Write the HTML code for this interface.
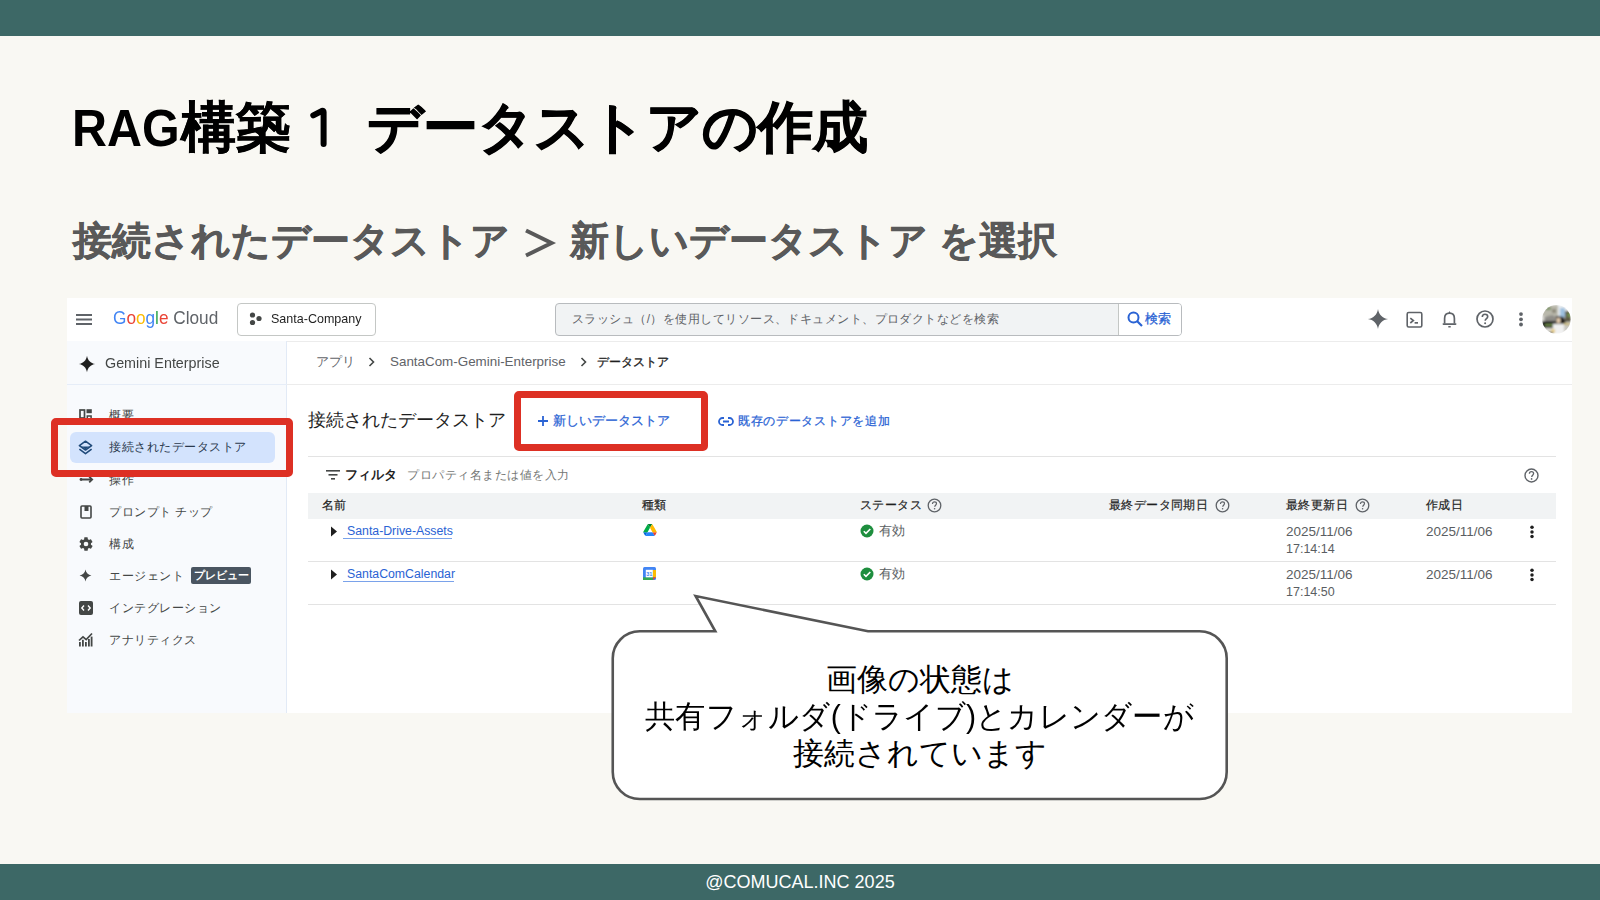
<!DOCTYPE html>
<html><head><meta charset="utf-8">
<style>
*{box-sizing:border-box;margin:0;padding:0}
html,body{width:1600px;height:900px;overflow:hidden}
body{position:relative;background:#f9f8f3;font-family:"Liberation Sans",sans-serif;color:#000}
.a{position:absolute;white-space:nowrap}
#topbar{position:absolute;left:0;top:0;width:1600px;height:36px;background:#3d6866}
#botbar{position:absolute;left:0;top:864px;width:1600px;height:36px;background:#3d6866}
#footer{position:absolute;left:0;top:864px;width:1600px;height:36px;line-height:36px;text-align:center;color:#fff;font-size:18px}
.tt{font-size:55px;font-weight:bold;line-height:64px;color:#000;top:94px}
.st{font-size:39px;font-weight:bold;line-height:52px;color:#595959;top:215px}
#shot{position:absolute;left:67px;top:298px;width:1505px;height:415px;background:#fff}
#side{position:absolute;left:67px;top:341px;width:220px;height:372px;background:#f8fafd;border-right:1px solid #e2eaf6}
.hl{position:absolute;height:1px;background:#e3e3e3}
.g13{font-size:13px;color:#444746;line-height:16px}
.mi{left:109px;font-size:12px;letter-spacing:0.5px;color:#444746;line-height:16px}
.th{font-size:12px;color:#1f1f1f;line-height:16px;letter-spacing:0.4px;-webkit-text-stroke:0.2px #1f1f1f}
.td{font-size:12.5px;color:#5a5e62;line-height:17.3px}
.blue{color:#2a63d4}
.red{position:absolute;border:7.7px solid #dd3024;border-radius:5px}
svg{position:absolute;overflow:visible}
</style></head>
<body>
<div id="topbar"></div>
<div class="a tt" style="left:72px;top:96px;font-size:51.5px;transform:scaleX(0.94);transform-origin:0 0">RAG</div>
<div class="a tt" style="left:181px;top:95px;-webkit-text-stroke:0.4px #000">構築</div>
<svg style="left:0;top:0" width="400" height="200"><path d="M313.3 115.3 L322 110.8 Q323.6 110.2 323.6 112 L323.6 144" fill="none" stroke="#000" stroke-width="6" stroke-linecap="round" stroke-linejoin="round"/></svg>
<div class="a tt" style="left:367px;top:95px;-webkit-text-stroke:0.9px #000">データストアの作成</div>
<div class="a st" style="left:73px;-webkit-text-stroke:0.5px #595959">接続されたデータストア</div>
<svg style="left:0;top:0" width="600" height="300"><path d="M526 230.5 L551.5 243 L526 255.5" fill="none" stroke="#595959" stroke-width="4"/></svg>
<div class="a st" style="left:570px;-webkit-text-stroke:0.5px #595959">新しいデータストア</div>
<div class="a st" style="left:939px;-webkit-text-stroke:0.5px #595959">を選択</div>

<div id="shot"></div>
<div class="hl" style="left:67px;top:341px;width:1505px;background:#ececec"></div>
<div id="side"></div>

<!-- header -->
<svg style="left:76px;top:313px" width="16" height="12"><g fill="#5f6368"><rect x="0" y="1" width="16" height="2"/><rect x="0" y="5.5" width="16" height="2"/><rect x="0" y="10" width="16" height="2"/></g></svg>
<div class="a" style="left:113px;top:307px;font-size:18.5px;line-height:22px;transform:scaleX(0.93);transform-origin:0 0"><span style="color:#4285f4">G</span><span style="color:#ea4335">o</span><span style="color:#fbbc04">o</span><span style="color:#4285f4">g</span><span style="color:#34a853">l</span><span style="color:#ea4335">e</span> <span style="color:#5f6368">Cloud</span></div>
<div class="a" style="left:237px;top:303px;width:139px;height:33px;border:1px solid #c4c7c5;border-radius:4px;background:#fff"></div>
<svg style="left:249px;top:312px" width="14" height="14"><g fill="#444746"><circle cx="3.5" cy="3" r="2.6"/><circle cx="10" cy="6.5" r="2.6"/><circle cx="3.5" cy="10.5" r="2.6"/></g></svg>
<div class="a" style="left:271px;top:311px;font-size:13px;line-height:16px;color:#1f1f1f;transform:scaleX(0.963);transform-origin:0 0">Santa-Company</div>
<div class="a" style="left:555px;top:303px;width:627px;height:33px;border:1px solid #b8bbbe;border-radius:4px;background:#f1f3f4;overflow:hidden"><div style="position:absolute;left:562px;top:0;width:64px;height:31px;background:#fff;border-left:1px solid #c4c7c5"></div></div>
<div class="a" style="left:572px;top:311px;font-size:12px;letter-spacing:0.45px;line-height:16px;color:#5f6368">スラッシュ（/）を使用してリソース、ドキュメント、プロダクトなどを検索</div>
<svg style="left:1127px;top:311px" width="16" height="16"><circle cx="6.5" cy="6.5" r="5" fill="none" stroke="#2a63d4" stroke-width="2"/><line x1="10" y1="10" x2="15" y2="15" stroke="#2a63d4" stroke-width="2.2"/></svg>
<div class="a blue" style="left:1145px;top:311px;font-size:13px;line-height:16px;-webkit-text-stroke:0.3px #2a63d4">検索</div>
<!-- right icons -->
<svg style="left:1367px;top:308px" width="22" height="22" viewBox="0 0 24 24"><path fill="#5f6368" d="M12 1 C12.8 7 17 11.2 23 12 C17 12.8 12.8 17 12 23 C11.2 17 7 12.8 1 12 C7 11.2 11.2 7 12 1Z"/></svg>
<svg style="left:1406px;top:311px" width="17" height="17"><rect x="1.2" y="1.5" width="14.6" height="14.5" rx="1.5" fill="none" stroke="#5f6368" stroke-width="1.6"/><path d="M4.3 7.2 L7.3 9.6 L4.3 12" fill="none" stroke="#5f6368" stroke-width="1.7"/><rect x="8.6" y="11" width="3.4" height="1.7" fill="#5f6368"/></svg>
<svg style="left:1441px;top:310px" width="17" height="19"><path d="M3.6 13.5 L3.6 8.5 C3.6 5.3 5.6 3.2 8.5 3.2 C11.4 3.2 13.4 5.3 13.4 8.5 L13.4 13.5" fill="none" stroke="#5f6368" stroke-width="1.7"/><rect x="1.5" y="13.2" width="14" height="1.7" rx="0.8" fill="#5f6368"/><path d="M7.3 3.6 L8.5 0.9 L9.7 3.6Z" fill="#5f6368"/><rect x="7.3" y="16" width="2.4" height="1.5" fill="#5f6368"/></svg>
<svg style="left:1476px;top:310px" width="18" height="18"><circle cx="9" cy="9" r="8" fill="none" stroke="#5f6368" stroke-width="1.7"/><path d="M6.3 7 C6.3 5.3 7.6 4.3 9 4.3 C10.5 4.3 11.7 5.3 11.7 6.8 C11.7 8.6 9.2 8.8 9.2 10.8" fill="none" stroke="#5f6368" stroke-width="1.6"/><circle cx="9.1" cy="13.2" r="1" fill="#5f6368"/></svg>
<svg style="left:1518px;top:312px" width="6" height="15"><g fill="#5f6368"><circle cx="3" cy="2.1" r="1.9"/><circle cx="3" cy="7.3" r="1.9"/><circle cx="3" cy="12.5" r="1.9"/></g></svg>
<svg style="left:1542px;top:305px" width="29" height="29"><defs><clipPath id="av"><circle cx="14.4" cy="14.3" r="14.3"/></clipPath><filter id="bl"><feGaussianBlur stdDeviation="0.8"/></filter></defs><g clip-path="url(#av)"><g filter="url(#bl)"><rect width="29" height="29" fill="#d9d8d2"/><rect x="0" y="0" width="16" height="11" fill="#b9b8ab"/><rect x="3" y="2" width="6" height="3" fill="#7d9468"/><rect x="10" y="4" width="4" height="4" fill="#8e8a7c"/><rect x="16" y="0" width="9" height="13" fill="#e8ecef"/><rect x="18" y="3" width="5" height="9" fill="#9ec1e0"/><rect x="23" y="6" width="6" height="11" fill="#5f5a45"/><rect x="25" y="8" width="4" height="4" fill="#6f8a4f"/><path d="M2 12 L10 10 L22 15 L17 21 L3 17Z" fill="#8f8d88"/><rect x="0" y="16" width="14" height="7" fill="#1f1f1a"/><rect x="3" y="19" width="9" height="2" fill="#6e8a48"/><path d="M14 11 L22 12 L24 20 L14 21Z" fill="#141414"/><rect x="14.5" y="13" width="4" height="5" fill="#e6cdb0"/><rect x="11" y="19" width="11" height="10" fill="#f1f1f1"/><rect x="22" y="19" width="7" height="7" fill="#c9c7c0"/><rect x="22" y="18" width="6" height="2" fill="#c8b56a"/><rect x="9" y="24" width="4" height="4" fill="#e7cf8b"/><rect x="5" y="27" width="6" height="2" fill="#555"/></g></g></svg>

<!-- sidebar -->
<div class="hl" style="left:67px;top:384px;width:220px;background:#e6edf8"></div>
<svg style="left:78px;top:355px" width="18" height="18" viewBox="0 0 24 24"><path fill="#1f1f1f" d="M12 1 C12.8 7 17 11.2 23 12 C17 12.8 12.8 17 12 23 C11.2 17 7 12.8 1 12 C7 11.2 11.2 7 12 1Z"/></svg>
<div class="a" style="left:105px;top:354px;font-size:15px;line-height:18px;color:#444746;transform:scaleX(0.955);transform-origin:0 0">Gemini Enterprise</div>

<div class="a" style="left:70px;top:432px;width:205px;height:31px;background:#d3e3fd;border-radius:6px"></div>

<svg style="left:79px;top:409px" width="13" height="13"><g fill="none" stroke="#444746" stroke-width="1.7"><rect x="1" y="1" width="4.5" height="8"/></g><rect x="7.5" y="0.2" width="5.3" height="4" fill="#444746"/><rect x="8.3" y="7" width="3.8" height="4" fill="none" stroke="#444746" stroke-width="1.5"/></svg>
<div class="a mi" style="top:407px">概要</div>

<svg style="left:78px;top:440px" width="15" height="15"><path d="M7.5 1.2 L13.6 5.6 L7.5 10 L1.4 5.6Z" fill="none" stroke="#1f4a7a" stroke-width="1.6" stroke-linejoin="round"/><path d="M3.6 6.4 L11.4 6.4 L7.5 9.2Z" fill="#1f4a7a"/><path d="M1.4 9.2 L7.5 13.6 L13.6 9.2" fill="none" stroke="#1f4a7a" stroke-width="1.6" stroke-linejoin="round"/></svg>
<div class="a mi" style="top:439px;color:#2b3a4e">接続されたデータストア</div>

<svg style="left:79px;top:474px" width="15" height="12"><path d="M2 5.5 L13 5.5 M10.2 2.6 L13.2 5.5 L10.2 8.4" fill="none" stroke="#444746" stroke-width="1.8"/><circle cx="2" cy="5.5" r="1.4" fill="#444746"/></svg>
<div class="a mi" style="top:472px">操作</div>

<svg style="left:80px;top:505px" width="12" height="14"><rect x="1" y="1" width="10" height="12" rx="1" fill="none" stroke="#444746" stroke-width="1.6"/><rect x="4.5" y="1" width="4" height="5" fill="#444746"/></svg>
<div class="a mi" style="top:504px">プロンプト チップ</div>

<svg style="left:78px;top:536px" width="16" height="16" viewBox="0 0 24 24"><path fill="#444746" d="M19.4 13c.04-.3.06-.65.06-1s-.02-.7-.06-1l2.1-1.65c.2-.15.25-.42.12-.64l-2-3.46c-.12-.22-.39-.3-.61-.22l-2.5 1c-.52-.4-1.08-.73-1.7-.98l-.37-2.65A.49.49 0 0 0 14 2h-4c-.25 0-.46.18-.5.42l-.37 2.65c-.62.25-1.18.58-1.7.98l-2.5-1c-.22-.08-.49 0-.61.22l-2 3.46c-.13.22-.07.49.12.64L4.57 11c-.04.3-.07.66-.07 1s.03.7.07 1l-2.1 1.65c-.2.15-.25.42-.12.64l2 3.46c.12.22.39.3.61.22l2.5-1c.52.4 1.08.73 1.7.98l.37 2.65c.04.24.25.42.5.42h4c.25 0 .46-.18.5-.42l.37-2.65c.62-.25 1.18-.58 1.7-.98l2.5 1c.22.08.49 0 .61-.22l2-3.46c.12-.22.07-.49-.12-.64L19.4 13zM12 15.5A3.5 3.5 0 1 1 12 8.5a3.5 3.5 0 0 1 0 7z"/></svg>
<div class="a mi" style="top:536px">構成</div>

<svg style="left:79px;top:569px" width="13" height="13" viewBox="0 0 24 24"><path fill="#444746" d="M12 1 C12.8 7 17 11.2 23 12 C17 12.8 12.8 17 12 23 C11.2 17 7 12.8 1 12 C7 11.2 11.2 7 12 1Z"/></svg>
<div class="a mi" style="top:568px">エージェント</div>
<div class="a" style="left:191px;top:567px;width:60px;height:17px;background:#4a5561;border-radius:2px;color:#fff;font-size:10.5px;font-weight:bold;line-height:17px;text-align:center">プレビュー</div>

<svg style="left:79px;top:601px" width="14" height="14"><rect x="0" y="0" width="14" height="14" rx="2" fill="#444746"/><path d="M5 4.5 L2.8 7 L5 9.5 M9 4.5 L11.2 7 L9 9.5" fill="none" stroke="#fff" stroke-width="1.4"/></svg>
<div class="a mi" style="top:600px">インテグレーション</div>

<svg style="left:78px;top:632px" width="15" height="15"><path d="M1 8.5 L5 4.8 L8.2 7.6 L14 1.5" fill="none" stroke="#444746" stroke-width="1.7"/><g fill="#444746"><rect x="1" y="10" width="1.8" height="4.5"/><rect x="4" y="7.8" width="1.8" height="6.7"/><rect x="7" y="10" width="1.8" height="4.5"/><rect x="10" y="7" width="1.8" height="7.5"/><rect x="12.7" y="4.6" width="1.8" height="9.9"/></g></svg>
<div class="a mi" style="top:632px">アナリティクス</div>

<!-- main -->
<div class="a g13" style="left:316px;top:354px;color:#5f6368">アプリ</div>
<svg style="left:368px;top:357px" width="8" height="10"><path d="M1.5 1 L5.5 5 L1.5 9" fill="none" stroke="#444746" stroke-width="1.6"/></svg>
<div class="a g13" style="left:390px;top:354px;color:#5f6368;font-size:13.4px">SantaCom-Gemini-Enterprise</div>
<svg style="left:580px;top:357px" width="8" height="10"><path d="M1.5 1 L5.5 5 L1.5 9" fill="none" stroke="#444746" stroke-width="1.6"/></svg>
<div class="a g13" style="left:597px;top:354px;color:#1f1f1f;font-size:12px;-webkit-text-stroke:0.35px #1f1f1f">データストア</div>
<div class="hl" style="left:287px;top:384px;width:1285px;background:#ececec"></div>

<div class="a" style="left:308px;top:409px;font-size:18px;line-height:22px;color:#1f1f1f">接続されたデータストア</div>
<svg style="left:537px;top:415px" width="12" height="12"><path d="M6 1 V11 M1 6 H11" stroke="#2a63d4" stroke-width="1.8"/></svg>
<div class="a blue" style="left:553px;top:413px;font-size:12.5px;line-height:16px;-webkit-text-stroke:0.25px #2a63d4">新しいデータストア</div>
<svg style="left:718px;top:415px" width="16" height="13"><path d="M6 3 H4.5 A3.5 3.5 0 0 0 4.5 10 H6 M10 3 H11.5 A3.5 3.5 0 0 1 11.5 10 H10 M5 6.5 H11" fill="none" stroke="#2a63d4" stroke-width="1.8"/></svg>
<div class="a blue" style="left:738px;top:413px;font-size:12px;letter-spacing:0.7px;line-height:16px;-webkit-text-stroke:0.25px #2a63d4">既存のデータストアを追加</div>
<div class="hl" style="left:308px;top:456px;width:1248px"></div>

<svg style="left:326px;top:469px" width="14" height="11"><g fill="#444746"><rect x="0" y="1" width="14" height="1.6"/><rect x="2.5" y="5" width="9" height="1.6"/><rect x="5" y="9" width="4" height="1.6"/></g></svg>
<div class="a" style="left:345px;top:467px;font-size:12.5px;line-height:16px;color:#1f1f1f;font-weight:bold">フィルタ</div>
<div class="a" style="left:407px;top:467px;font-size:12px;letter-spacing:0.5px;line-height:16px;color:#747775">プロパティ名または値を入力</div>
<svg style="left:1524px;top:468px" width="15" height="15"><circle cx="7.5" cy="7.5" r="6.5" fill="none" stroke="#5f6368" stroke-width="1.4"/><path d="M5.4 5.8 C5.4 4.5 6.4 3.7 7.5 3.7 C8.7 3.7 9.6 4.5 9.6 5.6 C9.6 7.1 7.7 7.3 7.7 8.9" fill="none" stroke="#5f6368" stroke-width="1.3"/><circle cx="7.6" cy="10.9" r="0.85" fill="#5f6368"/></svg>

<div class="a" style="left:308px;top:493px;width:1248px;height:26px;background:#f1f3f4"></div>
<div class="a th" style="left:322px;top:497px">名前</div>
<div class="a th" style="left:642px;top:497px">種類</div>
<div class="a th" style="left:860px;top:497px">ステータス</div>
<div class="a th" style="left:1109px;top:497px">最終データ同期日</div>
<div class="a th" style="left:1286px;top:497px">最終更新日</div>
<div class="a th" style="left:1426px;top:497px">作成日</div>
<svg class="qh" style="left:927px;top:498px" width="15" height="15"><circle cx="7.5" cy="7.5" r="6.3" fill="none" stroke="#5f6368" stroke-width="1.3"/><path d="M5.5 5.9 C5.5 4.6 6.4 3.8 7.5 3.8 C8.6 3.8 9.5 4.6 9.5 5.6 C9.5 7.1 7.7 7.3 7.7 8.8" fill="none" stroke="#5f6368" stroke-width="1.2"/><circle cx="7.6" cy="10.8" r="0.8" fill="#5f6368"/></svg>
<svg class="qh" style="left:1215px;top:498px" width="15" height="15"><circle cx="7.5" cy="7.5" r="6.3" fill="none" stroke="#5f6368" stroke-width="1.3"/><path d="M5.5 5.9 C5.5 4.6 6.4 3.8 7.5 3.8 C8.6 3.8 9.5 4.6 9.5 5.6 C9.5 7.1 7.7 7.3 7.7 8.8" fill="none" stroke="#5f6368" stroke-width="1.2"/><circle cx="7.6" cy="10.8" r="0.8" fill="#5f6368"/></svg>
<svg class="qh" style="left:1355px;top:498px" width="15" height="15"><circle cx="7.5" cy="7.5" r="6.3" fill="none" stroke="#5f6368" stroke-width="1.3"/><path d="M5.5 5.9 C5.5 4.6 6.4 3.8 7.5 3.8 C8.6 3.8 9.5 4.6 9.5 5.6 C9.5 7.1 7.7 7.3 7.7 8.8" fill="none" stroke="#5f6368" stroke-width="1.2"/><circle cx="7.6" cy="10.8" r="0.8" fill="#5f6368"/></svg>

<!-- row 1 -->
<svg style="left:330px;top:526px" width="8" height="11"><path d="M1 0.5 L7 5.5 L1 10.5Z" fill="#1f1f1f"/></svg>
<div class="a blue" style="left:347px;top:523px;font-size:12.3px;line-height:16px">Santa-Drive-Assets</div><div class="hl" style="left:343px;top:538px;width:109px;background:#7aa2ea"></div>
<svg style="left:643px;top:524px" width="14" height="12" viewBox="0 0 87.3 78"><path d="m6.6 66.85 3.85 6.65c.8 1.4 1.95 2.5 3.3 3.3l13.75-23.8h-27.5c0 1.55.4 3.1 1.2 4.5z" fill="#0066da"/><path d="m43.65 25-13.75-23.8c-1.35.8-2.5 1.9-3.3 3.3l-25.4 44a9.06 9.06 0 0 0 -1.2 4.5h27.5z" fill="#00ac47"/><path d="m73.55 76.8c1.35-.8 2.5-1.9 3.3-3.3l1.6-2.75 7.65-13.25c.8-1.4 1.2-2.95 1.2-4.5h-27.502l5.852 11.5z" fill="#ea4335"/><path d="m43.65 25 13.75-23.8c-1.35-.8-2.9-1.2-4.5-1.2h-18.5c-1.6 0-3.15.45-4.5 1.2z" fill="#00832d"/><path d="m59.8 53h-32.3l-13.75 23.8c1.35.8 2.9 1.2 4.5 1.2h50.8c1.6 0 3.15-.45 4.5-1.2z" fill="#2684fc"/><path d="m73.4 26.5-12.7-22c-.8-1.4-1.95-2.5-3.3-3.3l-13.75 23.8 16.15 28h27.45c0-1.55-.4-3.1-1.2-4.5z" fill="#ffba00"/></svg>
<svg style="left:860px;top:524px" width="14" height="14"><circle cx="7" cy="7" r="6.5" fill="#1e8e3e"/><path d="M3.8 7.2 L6 9.4 L10.3 5" fill="none" stroke="#fff" stroke-width="1.6"/></svg>
<div class="a td" style="left:879px;top:523px">有効</div>
<div class="a td" style="left:1286px;top:523px"><span style="font-size:13.5px">2025/11/06</span><br>17:14:14</div>
<div class="a td" style="left:1426px;top:523px;font-size:13.5px">2025/11/06</div>
<svg style="left:1529px;top:525px" width="6" height="14"><g fill="#1f1f1f"><circle cx="3" cy="2.2" r="1.75"/><circle cx="3" cy="6.9" r="1.75"/><circle cx="3" cy="11.6" r="1.75"/></g></svg>
<div class="hl" style="left:308px;top:561px;width:1248px"></div>

<!-- row 2 -->
<svg style="left:330px;top:569px" width="8" height="11"><path d="M1 0.5 L7 5.5 L1 10.5Z" fill="#1f1f1f"/></svg>
<div class="a blue" style="left:347px;top:566px;font-size:12.3px;line-height:16px">SantaComCalendar</div><div class="hl" style="left:343px;top:581px;width:111px;background:#7aa2ea"></div>
<svg style="left:643px;top:567px" width="13" height="13"><rect x="0" y="0" width="13" height="13" rx="1.5" fill="#4285f4"/><rect x="9.8" y="3" width="3.2" height="7.5" fill="#fbbc04"/><rect x="0" y="10.3" width="10" height="2.7" fill="#34a853"/><path d="M10 10.3 H13 L10 13Z" fill="#ea4335"/><rect x="2.8" y="2.8" width="7" height="7.5" fill="#fff"/><text x="6.3" y="8.9" font-size="5.5" fill="#4285f4" text-anchor="middle" font-family="Liberation Sans" font-weight="bold">31</text></svg>
<svg style="left:860px;top:567px" width="14" height="14"><circle cx="7" cy="7" r="6.5" fill="#1e8e3e"/><path d="M3.8 7.2 L6 9.4 L10.3 5" fill="none" stroke="#fff" stroke-width="1.6"/></svg>
<div class="a td" style="left:879px;top:566px">有効</div>
<div class="a td" style="left:1286px;top:566px"><span style="font-size:13.5px">2025/11/06</span><br>17:14:50</div>
<div class="a td" style="left:1426px;top:566px;font-size:13.5px">2025/11/06</div>
<svg style="left:1529px;top:568px" width="6" height="14"><g fill="#1f1f1f"><circle cx="3" cy="2.2" r="1.75"/><circle cx="3" cy="6.9" r="1.75"/><circle cx="3" cy="11.6" r="1.75"/></g></svg>
<div class="hl" style="left:308px;top:604px;width:1248px"></div>

<!-- red boxes -->
<div class="red" style="left:51px;top:418px;width:242px;height:59px"></div>
<div class="red" style="left:514px;top:391px;width:194px;height:60px"></div>

<!-- callout -->
<svg style="left:0;top:0" width="1600" height="900"><path d="M640 631.3 H715.3 L695.6 596 L868 631.3 H1199.7 A27 27 0 0 1 1226.7 658.3 V772 A27 27 0 0 1 1199.7 799 H639.75 A27 27 0 0 1 612.75 772 V658.3 A27 27 0 0 1 639.75 631.3Z" fill="#fff" stroke="#555" stroke-width="2.6" stroke-linejoin="miter"/></svg>
<div class="a" style="left:612px;top:661px;width:615px;text-align:center;font-size:31px;line-height:37px;color:#000">画像の状態は</div>
<div class="a" style="left:612px;top:698px;width:615px;text-align:center;font-size:31px;line-height:37px;color:#000;transform:scaleX(0.977)">共有フォルダ(ドライブ)とカレンダーが</div>
<div class="a" style="left:612px;top:735px;width:615px;text-align:center;font-size:31px;line-height:37px;color:#000">接続されています</div>

<div id="botbar"></div>
<div id="footer">@COMUCAL.INC 2025</div>
</body></html>
